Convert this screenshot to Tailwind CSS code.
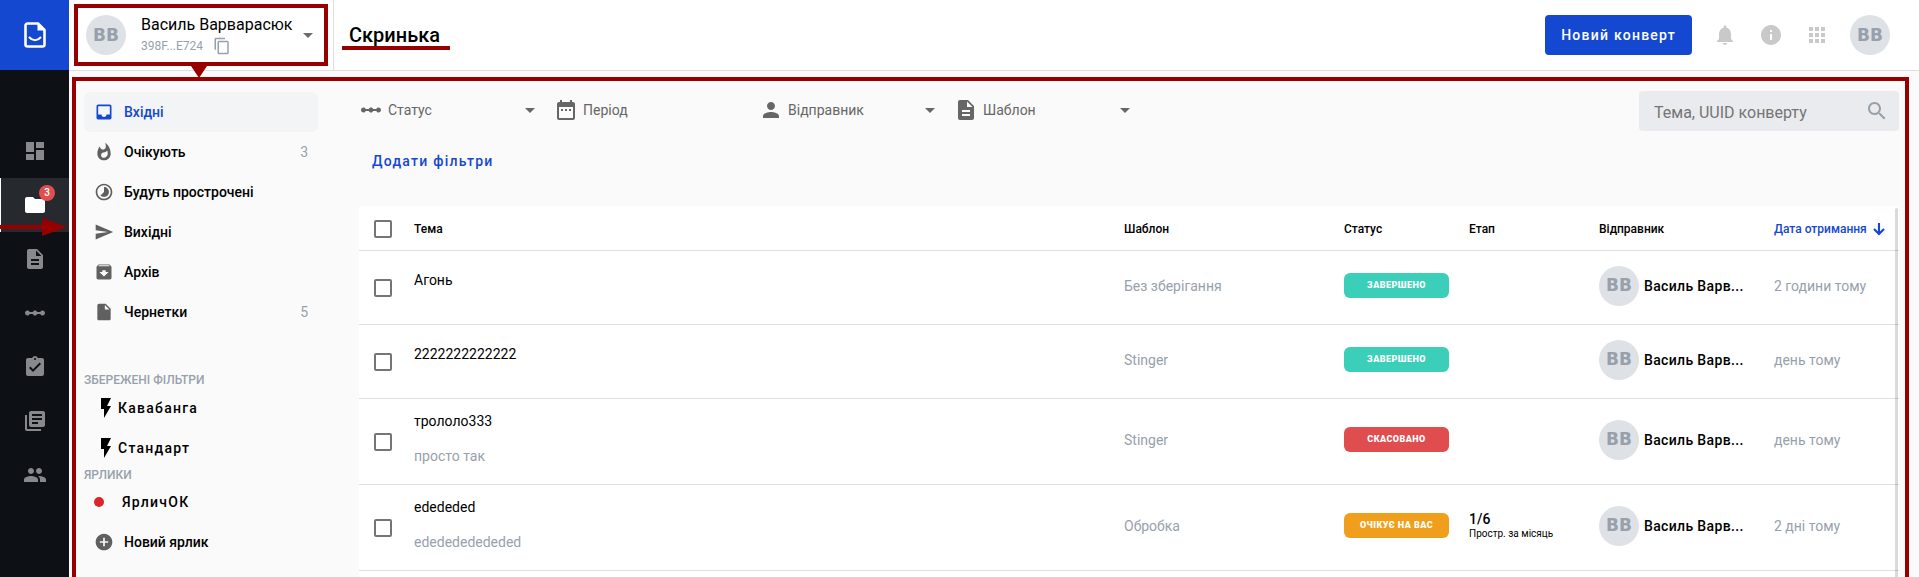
<!DOCTYPE html>
<html lang="uk">
<head>
<meta charset="utf-8">
<title>Скринька</title>
<script src="https://cdn.jsdelivr.net/npm/@tailwindcss/browser@4"></script>
</head>
<body class="relative flex h-screen overflow-hidden bg-[#fafafa] font-[Roboto,sans-serif] text-sm text-black">
<svg class="hidden">
  <symbol id="scale" viewBox="0 0 24 24"><path d="M19.500 9.500c-1.030 0-1.900.620-2.290 1.500h-2.920c-.390-.880-1.260-1.500-2.290-1.500s-1.900.620-2.290 1.500H6.790C6.400 10.120 5.530 9.500 4.500 9.500 3.120 9.500 2 10.620 2 12s1.120 2.500 2.500 2.500c1.030 0 1.900-.620 2.290-1.500h2.920c.390.880 1.260 1.500 2.290 1.500s1.900-.620 2.290-1.500h2.920c.390.880 1.260 1.500 2.290 1.500 1.380 0 2.500-1.120 2.500-2.500s-1.120-2.500-2.500-2.500z"/></symbol>
  <symbol id="doc" viewBox="0 0 24 24"><path d="M14 2H6c-1.100 0-1.990.900-1.990 2L4 20c0 1.100.890 2 1.990 2H18c1.100 0 2-.900 2-2V8l-6-6zm2 16H8v-2h8v2zm0-4H8v-2h8v2zm-3-5V3.500L18.500 9H13z"/></symbol>
  <symbol id="caret" viewBox="0 0 24 24"><path d="M7 10l5 5 5-5z"/></symbol>
  <symbol id="bolt" viewBox="0 0 24 24"><path d="M7 2v11h3v9l7-12h-4l4-8z"/></symbol>
</svg>

<aside class="flex w-[69px] shrink-0 flex-col bg-[#0d1116]">
  <a href="#" aria-label="Головна" class="flex h-[70px] items-center justify-center bg-[#1548d0]">
    <svg class="h-7 w-6" viewBox="0 0 24 28" fill="none" stroke="#fff"><path stroke-width="2.600" stroke-linejoin="round" d="M4.500 2.500h10.500l6.500 6.500v14.500a2 2 0 0 1-2 2h-15a2 2 0 0 1-2-2v-19a2 2 0 0 1 2-2z"/><path d="M14.500 3v6.500h7z" fill="#fff" stroke="none"/><path stroke-width="2" stroke-linecap="round" d="M6.500 16.500c3 3.500 8 3.500 11 0"/></svg>
  </a>
  <nav class="mt-[54px] flex flex-col text-[#88898c]">
    <a href="#" aria-label="Огляд" class="flex h-[54px] items-center justify-center"><svg class="size-6" viewBox="0 0 24 24" fill="currentColor"><path d="M3 13h8V3H3v10zm0 8h8v-6H3v6zm10 0h8V11h-8v10zm0-18v6h8V3h-8z"/></svg></a>
    <a href="#" aria-label="Скринька" class="relative flex h-[54px] items-center justify-center border-l border-white bg-[#26292d] text-white"><svg class="size-6" viewBox="0 0 24 24" fill="currentColor"><path d="M10 4H4c-1.100 0-1.990.900-1.990 2L2 18c0 1.100.900 2 2 2h16c1.100 0 2-.900 2-2V8c0-1.100-.900-2-2-2h-8l-2-2z"/></svg>
      <span class="absolute top-[7px] right-[14px] flex size-4 items-center justify-center rounded-full bg-[#e04e50] text-[10px] font-medium">3</span></a>
    <a href="#" aria-label="Шаблони" class="flex h-[54px] items-center justify-center"><svg class="size-6" fill="currentColor"><use href="#doc"/></svg></a>
    <a href="#" aria-label="Процеси" class="flex h-[54px] items-center justify-center"><svg class="size-6" fill="currentColor"><use href="#scale"/></svg></a>
    <a href="#" aria-label="Завдання" class="flex h-[54px] items-center justify-center"><svg class="size-6" viewBox="0 0 24 24" fill="currentColor"><path d="M19 3h-4.180C14.400 1.840 13.300 1 12 1c-1.300 0-2.400.840-2.820 2H5c-1.100 0-2 .900-2 2v14c0 1.100.900 2 2 2h14c1.100 0 2-.900 2-2V5c0-1.100-.900-2-2-2zm-7 0c.550 0 1 .450 1 1s-.450 1-1 1-1-.450-1-1 .450-1 1-1zm-2 14l-4-4 1.410-1.410L10 14.170l6.590-6.590L18 9l-8 8z"/></svg></a>
    <a href="#" aria-label="Довідники" class="flex h-[54px] items-center justify-center"><svg class="size-6" viewBox="0 0 24 24" fill="currentColor"><path d="M4 6H2v14c0 1.100.900 2 2 2h14v-2H4V6zm16-4H8c-1.100 0-2 .900-2 2v12c0 1.100.900 2 2 2h12c1.100 0 2-.900 2-2V4c0-1.100-.900-2-2-2zm-1 9H9V9h10v2zm-4 4H9v-2h6v2zm4-8H9V5h10v2z"/></svg></a>
    <a href="#" aria-label="Контакти" class="flex h-[54px] items-center justify-center"><svg class="size-6" viewBox="0 0 24 24" fill="currentColor"><path d="M16 11c1.660 0 2.990-1.340 2.990-3S17.660 5 16 5c-1.660 0-3 1.340-3 3s1.340 3 3 3zm-8 0c1.660 0 2.990-1.340 2.990-3S9.660 5 8 5C6.340 5 5 6.340 5 8s1.340 3 3 3zm0 2c-2.330 0-7 1.170-7 3.500V19h14v-2.500c0-2.330-4.670-3.500-7-3.500zm8 0c-.290 0-.620.020-.970.050 1.160.840 1.970 1.970 1.970 3.450V19h6v-2.500c0-2.330-4.670-3.500-7-3.500z"/></svg></a>
  </nav>
</aside>

<div class="flex min-w-0 flex-1 flex-col">
  <header class="flex h-[71px] shrink-0 items-stretch border-b border-[#dfdfdf] bg-white">
    <button class="flex w-[265px] shrink-0 items-center border-r border-[#dfdfdf] pr-[13px] pl-[17px] text-left">
      <span class="flex size-10 shrink-0 items-center justify-center rounded-full bg-[#dee2e6] font-['DejaVu_Sans'] text-[17px] font-bold text-[#98a1ab]">ВВ</span>
      <span class="ml-[15px] flex flex-1 flex-col">
        <span class="text-base leading-[22px]">Василь Варварасюк</span>
        <span class="flex h-5 items-center gap-2.5 text-xs text-[#98a1ab]">398F...E724
          <svg class="size-[18px]" viewBox="0 0 24 24" fill="currentColor"><path d="M16 1H4c-1.100 0-2 .900-2 2v14h2V3h12V1zm3 4H8c-1.100 0-2 .900-2 2v14c0 1.100.900 2 2 2h11c1.100 0 2-.900 2-2V7c0-1.100-.900-2-2-2zm0 16H8V7h11v14z"/></svg></span>
      </span>
      <svg class="size-6 shrink-0 text-[#6c6c6c]" fill="currentColor"><use href="#caret"/></svg>
    </button>
    <h1 class="flex flex-1 items-center pl-[15px] text-xl font-medium">Скринька</h1>
    <div class="flex items-center gap-[21px] pr-[29px] text-[#c9c9c9]">
      <button class="h-10 rounded bg-[#1548d0] px-4 text-sm font-medium tracking-[1.250px] text-white">Новий конверт</button>
      <div class="flex gap-[22px]">
        <button aria-label="Сповіщення"><svg class="size-6" viewBox="0 0 24 24" fill="currentColor"><path d="M12 22c1.100 0 2-.900 2-2h-4c0 1.100.890 2 2 2zm6-6v-5c0-3.070-1.640-5.640-4.500-6.320V4c0-.830-.670-1.500-1.500-1.500s-1.500.670-1.500 1.500v.680C7.630 5.360 6 7.920 6 11v5l-2 2v1h16v-1l-2-2z"/></svg></button>
        <button aria-label="Довідка"><svg class="size-6" viewBox="0 0 24 24" fill="currentColor"><path d="M12 2C6.480 2 2 6.480 2 12s4.480 10 10 10 10-4.480 10-10S17.520 2 12 2zm1 15h-2v-6h2v6zm0-8h-2V7h2v2z"/></svg></button>
        <button aria-label="Застосунки"><svg class="size-6" viewBox="0 0 24 24" fill="currentColor"><path d="M4 8h4V4H4v4zm6 12h4v-4h-4v4zm-6 0h4v-4H4v4zm0-6h4v-4H4v4zm6 0h4v-4h-4v4zm6-10v4h4V4h-4zm-6 4h4V4h-4v4zm6 6h4v-4h-4v4zm0 6h4v-4h-4v4z"/></svg></button>
      </div>
      <button aria-label="Профіль" class="flex size-10 items-center justify-center rounded-full bg-[#dee2e6] font-['DejaVu_Sans'] text-[17px] font-bold text-[#98a1ab]">ВВ</button>
    </div>
  </header>

  <div class="flex min-h-0 flex-1">
    <nav class="flex w-[264px] shrink-0 flex-col px-[15px] pt-[21px] font-medium">
      <a href="#" class="flex h-10 shrink-0 items-center gap-2.5 rounded-md bg-[#f3f4f6] px-2.5 text-[#1548d0]"><svg class="size-5" viewBox="0 0 24 24" fill="currentColor"><path d="M19 3H4.990c-1.110 0-1.980.890-1.980 2L3 19c0 1.100.880 2 1.990 2H19c1.100 0 2-.900 2-2V5c0-1.110-.900-2-2-2zm0 12h-4c0 1.660-1.350 3-3 3s-3-1.340-3-3H4.990V5H19v10z"/></svg>Вхідні</a>
      <a href="#" class="flex h-10 shrink-0 items-center gap-2.5 px-2.5"><svg class="size-5 text-[#606060]" viewBox="0 0 24 24" fill="currentColor"><path d="M13.500.670s.740 2.650.740 4.800c0 2.060-1.350 3.730-3.410 3.730-2.070 0-3.630-1.670-3.630-3.730l.030-.360C5.210 7.510 4 10.620 4 14c0 4.420 3.580 8 8 8s8-3.580 8-8C20 8.610 17.410 3.800 13.500.670zM11.710 19c-1.780 0-3.220-1.400-3.220-3.140 0-1.620 1.050-2.760 2.810-3.120 1.770-.360 3.600-1.210 4.620-2.580.390 1.290.590 2.650.590 4.040 0 2.650-2.150 4.800-4.800 4.800z"/></svg>Очікують<span class="ml-auto font-normal text-[#98a1ab]">3</span></a>
      <a href="#" class="flex h-10 shrink-0 items-center gap-2.5 px-2.5"><svg class="size-5 text-[#606060]" viewBox="0 0 24 24" fill="currentColor"><path d="M16.240 7.760C15.070 6.590 13.540 6 12 6v6l-4.240 4.240c2.340 2.340 6.140 2.340 8.490 0 2.340-2.340 2.340-6.140-.010-8.480zM12 2C6.480 2 2 6.480 2 12s4.480 10 10 10 10-4.480 10-10S17.520 2 12 2zm0 18c-4.420 0-8-3.580-8-8s3.580-8 8-8 8 3.580 8 8-3.580 8-8 8z"/></svg>Будуть прострочені</a>
      <a href="#" class="flex h-10 shrink-0 items-center gap-2.5 px-2.5"><svg class="size-5 text-[#606060]" viewBox="0 0 24 24" fill="currentColor"><path d="M2.010 21L23 12 2.010 3 2 10l15 2-15 2z"/></svg>Вихідні</a>
      <a href="#" class="flex h-10 shrink-0 items-center gap-2.5 px-2.5"><svg class="size-5 text-[#606060]" viewBox="0 0 24 24" fill="currentColor"><path fill-rule="evenodd" d="M20.540 5.230l-1.390-1.680C18.880 3.210 18.470 3 18 3H6c-.470 0-.880.210-1.160.550L3.460 5.230C3.170 5.570 3 6.020 3 6.500V19c0 1.100.900 2 2 2h14c1.100 0 2-.900 2-2V6.500c0-.480-.170-.930-.460-1.270zM12 17.500L6.500 12H10v-2h4v2h3.500L12 17.500zM5.120 5l.810-1h12l.940 1H5.120z"/></svg>Архів</a>
      <a href="#" class="flex h-10 shrink-0 items-center gap-2.5 px-2.5"><svg class="size-5 text-[#606060]" viewBox="0 0 24 24" fill="currentColor"><path d="M6 2c-1.100 0-1.990.900-1.990 2L4 20c0 1.100.890 2 1.990 2H18c1.100 0 2-.900 2-2V8l-6-6H6zm7 7V3.500L18.500 9H13z"/></svg>Чернетки<span class="ml-auto font-normal text-[#98a1ab]">5</span></a>
      <h2 class="mt-10 text-xs text-[#98a1ab]">ЗБЕРЕЖЕНІ ФІЛЬТРИ</h2>
      <a href="#" class="flex h-10 shrink-0 items-center px-2.5 tracking-[1.250px]"><svg class="size-6" fill="currentColor"><use href="#bolt"/></svg>Кавабанга</a>
      <a href="#" class="flex h-10 shrink-0 items-center px-2.5 tracking-[1.250px]"><svg class="size-6" fill="currentColor"><use href="#bolt"/></svg>Стандарт</a>
      <h2 class="text-xs leading-[14px] text-[#98a1ab]">ЯРЛИКИ</h2>
      <a href="#" class="flex h-10 shrink-0 items-center gap-[18px] px-2.5 tracking-[1.250px]"><span class="size-2.5 rounded-full bg-[#d8262a]"></span>ЯрличОК</a>
      <button class="flex h-10 shrink-0 items-center gap-2.5 px-2.5"><svg class="size-5 text-[#606060]" viewBox="0 0 24 24" fill="currentColor"><path d="M12 2C6.480 2 2 6.480 2 12s4.480 10 10 10 10-4.480 10-10S17.520 2 12 2zm5 11h-4v4h-2v-4H7v-2h4V7h2v4h4v2z"/></svg>Новий ярлик</button>
    </nav>

    <main class="flex min-w-0 flex-1 flex-col pt-5 pr-5 pl-[26px]">
      <div class="flex justify-between text-[#666]">
        <div class="flex gap-3">
          <label class="flex h-[38px] w-[183px] items-center"><svg class="mr-[5px] size-6 shrink-0" fill="currentColor"><use href="#scale"/></svg><select aria-label="Статус" class="min-w-0 flex-1 appearance-none"><option>Статус</option></select><svg class="size-6 shrink-0" fill="currentColor"><use href="#caret"/></svg></label>
          <button class="flex h-[38px] w-[193px] items-center"><svg class="mr-[5px] size-6 shrink-0" viewBox="0 0 24 24" fill="currentColor"><path d="M9 11H7v2h2v-2zm4 0h-2v2h2v-2zm4 0h-2v2h2v-2zm2-7h-1V2h-2v2H8V2H6v2H5c-1.110 0-1.990.900-1.990 2L3 20c0 1.100.890 2 2 2h14c1.100 0 2-.900 2-2V6c0-1.100-.900-2-2-2zm0 16H5V9h14v11z"/></svg>Період</button>
          <label class="flex h-[38px] w-[183px] items-center"><svg class="mr-[5px] size-6 shrink-0" viewBox="0 0 24 24" fill="currentColor"><path d="M12 12c2.210 0 4-1.790 4-4s-1.790-4-4-4-4 1.790-4 4 1.790 4 4 4zm0 2c-2.670 0-8 1.340-8 4v2h16v-2c0-2.660-5.330-4-8-4z"/></svg><select aria-label="Відправник" class="min-w-0 flex-1 appearance-none"><option>Відправник</option></select><svg class="size-6 shrink-0" fill="currentColor"><use href="#caret"/></svg></label>
          <label class="flex h-[38px] w-[183px] items-center"><svg class="mr-[5px] size-6 shrink-0" fill="currentColor"><use href="#doc"/></svg><select aria-label="Шаблон" class="min-w-0 flex-1 appearance-none"><option>Шаблон</option></select><svg class="size-6 shrink-0" fill="currentColor"><use href="#caret"/></svg></label>
        </div>
        <label class="flex h-10 w-[260px] items-center rounded bg-[#e9ebef] pr-2.5 pl-[15px]"><input type="text" aria-label="Пошук" placeholder="Тема, UUID конверту" class="min-w-0 flex-1 pt-1 text-base placeholder:text-[#757575]"><svg class="size-6 shrink-0 text-[#98a1ab]" viewBox="0 0 24 24" fill="currentColor"><path d="M15.500 14h-.790l-.280-.270C15.410 12.590 16 11.110 16 9.500 16 5.910 13.090 3 9.500 3S3 5.910 3 9.500 5.910 16 9.500 16c1.610 0 3.090-.590 4.230-1.570l.270.280v.790l5 4.990L20.490 19l-4.990-5zm-6 0C7.010 14 5 11.990 5 9.500S7.010 5 9.500 5 14 7.010 14 9.500 11.990 14 9.500 14z"/></svg></label>
      </div>
      <div class="flex h-[75px] items-start pt-5 pl-[13px]"><button class="font-medium tracking-[1.250px] text-[#1548d0]">Додати фільтри</button></div>

      <div class="relative min-h-0 flex-1 overflow-hidden rounded-t bg-white">
        <table class="w-full table-fixed border-separate border-spacing-0 text-left">
          <colgroup><col class="w-10"><col><col class="w-[220px]"><col class="w-[125px]"><col class="w-[130px]"><col class="w-[175px]"><col class="w-[140px]"></colgroup>
          <thead class="text-xs">
            <tr class="h-[45px] *:border-b *:border-[#dfdfdf] *:pt-0.5 *:pb-0 *:pl-[15px] *:font-medium">
              <th><input type="checkbox" aria-label="Вибрати всі" class="block size-[18px] appearance-none rounded-xs border-2 border-[#757575]"></th>
              <th>Тема</th><th>Шаблон</th><th>Статус</th><th>Етап</th><th>Відправник</th>
              <th><button class="flex items-center gap-1 text-[#1548d0]">Дата отримання<svg class="size-4" viewBox="0 0 24 24" fill="none" stroke="currentColor" stroke-width="3.200"><path d="M12 3v16M4.500 12l7.500 7.500 7.500-7.500"/></svg></button></th>
            </tr>
          </thead>
          <tbody class="text-[#98a1ab]">
            <tr class="h-[74px] *:border-b *:border-[#dfdfdf] *:pl-[15px] *:not-first:pb-1">
              <td><input type="checkbox" aria-label="Вибрати Агонь" class="block size-[18px] appearance-none rounded-xs border-2 border-[#757575]"></td>
              <td><div class="pb-3 text-black">Агонь</div></td><td>Без зберігання</td>
              <td><span class="flex h-[25px] w-[105px] items-center justify-center rounded-md bg-[#3bcfba] text-[9px] font-black tracking-wider text-white">ЗАВЕРШЕНО</span></td><td></td>
              <td><div class="flex items-center gap-[5px]"><span class="flex size-10 shrink-0 items-center justify-center rounded-full bg-[#dee2e6] font-['DejaVu_Sans'] text-[17px] font-bold text-[#98a1ab]">ВВ</span><span class="font-medium tracking-wide whitespace-nowrap text-black">Василь Варв...</span></div></td>
              <td>2 години тому</td>
            </tr>
            <tr class="h-[74px] *:border-b *:border-[#dfdfdf] *:pl-[15px] *:not-first:pb-1">
              <td><input type="checkbox" aria-label="Вибрати 2222222222222" class="block size-[18px] appearance-none rounded-xs border-2 border-[#757575]"></td>
              <td><div class="pb-3 text-black">2222222222222</div></td><td>Stinger</td>
              <td><span class="flex h-[25px] w-[105px] items-center justify-center rounded-md bg-[#3bcfba] text-[9px] font-black tracking-wider text-white">ЗАВЕРШЕНО</span></td><td></td>
              <td><div class="flex items-center gap-[5px]"><span class="flex size-10 shrink-0 items-center justify-center rounded-full bg-[#dee2e6] font-['DejaVu_Sans'] text-[17px] font-bold text-[#98a1ab]">ВВ</span><span class="font-medium tracking-wide whitespace-nowrap text-black">Василь Варв...</span></div></td>
              <td>день тому</td>
            </tr>
            <tr class="h-[86px] *:border-b *:border-[#dfdfdf] *:pl-[15px] *:not-first:pb-1">
              <td><input type="checkbox" aria-label="Вибрати трололо333" class="block size-[18px] appearance-none rounded-xs border-2 border-[#757575]"></td>
              <td><div class="flex flex-col gap-[15px] pb-0.5"><span class="text-black">трололо333</span><span>просто так</span></div></td><td>Stinger</td>
              <td><span class="flex h-[25px] w-[105px] items-center justify-center rounded-md bg-[#df4d4f] text-[9px] font-black tracking-wider text-white">СКАСОВАНО</span></td><td></td>
              <td><div class="flex items-center gap-[5px]"><span class="flex size-10 shrink-0 items-center justify-center rounded-full bg-[#dee2e6] font-['DejaVu_Sans'] text-[17px] font-bold text-[#98a1ab]">ВВ</span><span class="font-medium tracking-wide whitespace-nowrap text-black">Василь Варв...</span></div></td>
              <td>день тому</td>
            </tr>
            <tr class="h-[86px] *:border-b *:border-[#dfdfdf] *:pl-[15px] *:not-first:pb-1">
              <td><input type="checkbox" aria-label="Вибрати edededed" class="block size-[18px] appearance-none rounded-xs border-2 border-[#757575]"></td>
              <td><div class="flex flex-col gap-[15px] pb-0.5"><span class="text-black">edededed</span><span>ededededededed</span></div></td><td>Обробка</td>
              <td><span class="flex h-[25px] w-[105px] items-center justify-center rounded-md bg-[#ef9f1b] text-[9px] font-black tracking-wider text-white">ОЧІКУЄ НА ВАС</span></td>
              <td><div class="font-medium leading-4 text-black">1/6</div><div class="text-[10px] leading-[14px] text-black">Простр. за місяць</div></td>
              <td><div class="flex items-center gap-[5px]"><span class="flex size-10 shrink-0 items-center justify-center rounded-full bg-[#dee2e6] font-['DejaVu_Sans'] text-[17px] font-bold text-[#98a1ab]">ВВ</span><span class="font-medium tracking-wide whitespace-nowrap text-black">Василь Варв...</span></div></td>
              <td>2 дні тому</td>
            </tr>
          </tbody>
        </table>
        <div class="absolute top-0.5 right-px bottom-0 w-[3px] rounded-t bg-black/15"></div>
      </div>
    </main>
  </div>
</div>

<!-- Guide annotations laid over the interface -->
<div class="pointer-events-none absolute inset-0 overflow-hidden">
  <div class="absolute top-1 left-[74px] h-[62px] w-[254px] border-4 border-[#960000]"></div>
  <div class="absolute top-[46px] left-[342px] h-1 w-[108px] bg-[#960000]"></div>
  <div class="absolute top-[77px] right-2.5 bottom-0 left-[72px] border-4 border-b-0 border-[#960000]"></div>
  <svg class="absolute top-[66px] left-[191px] h-3 w-4" viewBox="0 0 16 12" fill="#960000"><path d="M0 0h16L8 12z"/></svg>
  <svg class="absolute top-[218px] left-0 h-[18px] w-[68px]" viewBox="0 0 68 18" fill="#960000"><path d="M0 7h42V0l25 9-25 9v-7H0z"/></svg>
</div>
</body>
</html>
